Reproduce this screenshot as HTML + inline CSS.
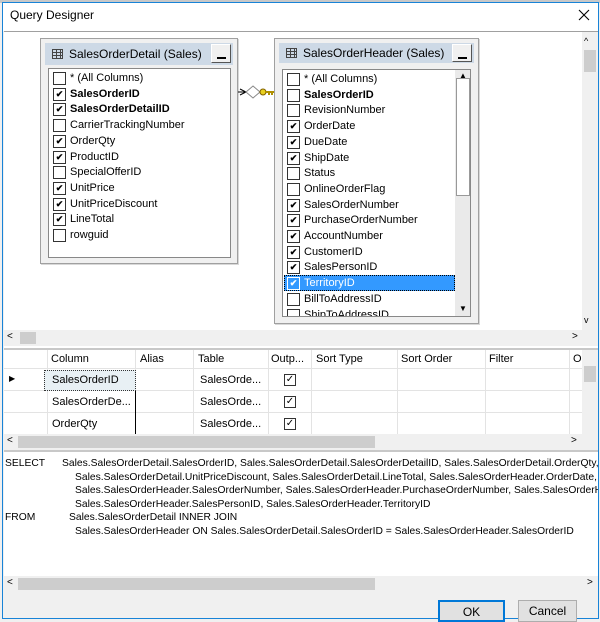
<!DOCTYPE html>
<html><head><meta charset="utf-8"><style>
*{margin:0;padding:0;box-sizing:border-box}
body{width:600px;height:619px;overflow:hidden;background:#f0f0f0;font-family:"Liberation Sans",sans-serif;font-size:11px;color:#000;position:relative}
.a{position:absolute}
.row{position:absolute;left:4px;height:15px;line-height:15px;white-space:nowrap;padding-left:17px}
.cb{position:absolute;left:0;top:1px;width:13px;height:13px;border:1px solid #333;background:#fff;text-align:center;font-size:9px;line-height:11px;font-weight:bold;overflow:hidden}
.b{font-weight:bold}
.tbl{position:absolute;background:#f0f0f0;border:1px solid #a0a0a0;box-shadow:1px 1px 0 #d8d8d8}
.hdr{position:absolute;left:4px;right:4px;top:4px;height:22px;background:#cdd9e6;line-height:22px;padding-left:24px;font-size:12px}
.hdr .ic{position:absolute;left:7px;top:6px;width:11px;height:10px;border:1px solid #444;background:repeating-linear-gradient(90deg,transparent 0 3px,#444 3px 4px),repeating-linear-gradient(0deg,transparent 0 2px,#444 2px 3px)}
.min{position:absolute;right:2px;top:1px;width:20px;height:19px;background:#f0f0f0;border:1px solid #888;border-color:#fff #555 #555 #fff}
.min:after{content:"";position:absolute;left:5px;top:12px;width:9px;height:2px;background:#000}
.list{position:absolute;background:#fff;border:1px solid #888}
.gl{position:absolute;top:0;height:84px;border-left:1px solid #e3e3e3}
.sql{position:absolute;left:6px;white-space:nowrap;font-size:10.3px;line-height:13.5px}
.btn{position:absolute;height:22px;top:600px;background:#e1e1e1;border:1px solid #adadad;text-align:center;line-height:20px;font-size:12px}
</style></head><body>
<div class="a" style="left:0;top:0;width:600px;height:3px;background:#c8c8c8"></div>
<div class="a" style="left:2px;top:2px;width:597px;height:617px;border:1px solid #1883d7;background:#f0f0f0"></div>
<div class="a" style="left:3px;top:3px;width:595px;height:28px;background:#fff"></div>
<div class="a" style="left:10px;top:8px;font-size:12px">Query Designer</div>
<svg class="a" style="left:578px;top:9px" width="12" height="12"><path d="M1 1l10 10M11 1L1 11" stroke="#000" stroke-width="1.1"/></svg>

<!-- diagram pane -->
<div class="a" style="left:4px;top:31px;width:594px;height:317px;background:#fff;border-top:1px solid #a0a0a0"></div>
<div class="a" style="left:582px;top:32px;width:16px;height:298px;background:#f0f0f0"></div>
<div class="a" style="left:584px;top:36px;font-size:9px">^</div>
<div class="a" style="left:584px;top:50px;width:12px;height:22px;background:#cdcdcd"></div>
<div class="a" style="left:584px;top:315px;font-size:9px">v</div>
<div class="a" style="left:4px;top:330px;width:594px;height:16px;background:#f0f0f0"></div>
<div class="a" style="left:7px;top:331px;font-size:10px">&lt;</div>
<div class="a" style="left:20px;top:332px;width:16px;height:12px;background:#cdcdcd"></div>
<div class="a" style="left:572px;top:331px;font-size:10px">&gt;</div>

<!-- left table -->
<div class="tbl" style="left:40px;top:38px;width:198px;height:226px">
<div class="hdr"><div class="ic"></div>SalesOrderDetail (Sales)<div class="min"></div></div>
<div class="list" style="left:7px;top:29px;width:183px;height:190px">
<div class="row" style="top:2px"><span class="cb"></span>* (All Columns)</div>
<div class="row b" style="top:18px"><span class="cb">✔</span>SalesOrderID</div>
<div class="row b" style="top:33px"><span class="cb">✔</span>SalesOrderDetailID</div>
<div class="row" style="top:49px"><span class="cb"></span>CarrierTrackingNumber</div>
<div class="row" style="top:65px"><span class="cb">✔</span>OrderQty</div>
<div class="row" style="top:81px"><span class="cb">✔</span>ProductID</div>
<div class="row" style="top:96px"><span class="cb"></span>SpecialOfferID</div>
<div class="row" style="top:112px"><span class="cb">✔</span>UnitPrice</div>
<div class="row" style="top:128px"><span class="cb">✔</span>UnitPriceDiscount</div>
<div class="row" style="top:143px"><span class="cb">✔</span>LineTotal</div>
<div class="row" style="top:159px"><span class="cb"></span>rowguid</div>
</div></div>

<!-- join connector -->
<svg class="a" style="left:238px;top:82px" width="36" height="20"><path d="M0 10h8M2 7l6 3-6 3" stroke="#000" fill="none"/><path d="M8 10l7-6 7 6-7 6z" fill="#fff" stroke="#888"/><circle cx="25" cy="10" r="3" fill="#e8d020" stroke="#806000"/><path d="M27 10h9M31 10v3M34 10v3" stroke="#b09000" stroke-width="2"/></svg>

<!-- right table -->
<div class="tbl" style="left:274px;top:38px;width:205px;height:286px">
<div class="hdr" style="height:20px;line-height:20px"><div class="ic" style="top:5px"></div>SalesOrderHeader (Sales)<div class="min" style="height:18px"></div></div>
<div class="list" style="left:7px;top:30px;width:189px;height:248px;overflow:hidden">
<div class="row" style="top:2px"><span class="cb"></span>* (All Columns)</div>
<div class="row b" style="top:18px"><span class="cb"></span>SalesOrderID</div>
<div class="row" style="top:33px"><span class="cb"></span>RevisionNumber</div>
<div class="row" style="top:49px"><span class="cb">✔</span>OrderDate</div>
<div class="row" style="top:65px"><span class="cb">✔</span>DueDate</div>
<div class="row" style="top:81px"><span class="cb">✔</span>ShipDate</div>
<div class="row" style="top:96px"><span class="cb"></span>Status</div>
<div class="row" style="top:112px"><span class="cb"></span>OnlineOrderFlag</div>
<div class="row" style="top:128px"><span class="cb">✔</span>SalesOrderNumber</div>
<div class="row" style="top:143px"><span class="cb">✔</span>PurchaseOrderNumber</div>
<div class="row" style="top:159px"><span class="cb">✔</span>AccountNumber</div>
<div class="row" style="top:175px"><span class="cb">✔</span>CustomerID</div>
<div class="row" style="top:190px"><span class="cb">✔</span>SalesPersonID</div>
<div class="a" style="left:1px;top:205px;width:171px;height:16px;background:#3399ff;border:1px dotted #000"></div>
<div class="row" style="top:206px;color:#fff"><span class="cb" style="background:#3399ff;border-color:#fff;color:#fff">✔</span>TerritoryID</div>
<div class="row" style="top:222px"><span class="cb"></span>BillToAddressID</div>
<div class="row" style="top:238px"><span class="cb"></span>ShipToAddressID</div>
<div class="a" style="left:172px;top:0;width:16px;height:248px;background:#eaeaea"></div>
<div class="a" style="left:173px;top:8px;width:14px;height:118px;background:#fff;border:1px solid #999"></div>
<div class="a" style="left:176px;top:1px;font-size:8px">▲</div>
<div class="a" style="left:176px;top:234px;font-size:8px">▼</div>
</div></div>

<!-- grid pane -->
<div class="a" style="left:4px;top:348px;width:594px;height:86px;background:#fff;border-top:2px solid #c8c8c8"></div>
<div class="a" style="left:4px;top:350px;width:578px;height:84px">
<div class="gl" style="left:43px"></div><div class="gl" style="left:131px"></div><div class="gl" style="left:189px"></div><div class="gl" style="left:264px"></div><div class="gl" style="left:307px"></div><div class="gl" style="left:393px"></div><div class="gl" style="left:481px"></div><div class="gl" style="left:565px"></div>
<div class="a" style="left:0;top:18px;width:578px;border-top:1px solid #e3e3e3"></div>
<div class="a" style="left:0;top:40px;width:578px;border-top:1px solid #e3e3e3"></div>
<div class="a" style="left:0;top:62px;width:578px;border-top:1px solid #e3e3e3"></div>
<div class="a" style="top:3px;left:47px">Column</div><div class="a" style="top:3px;left:136px">Alias</div><div class="a" style="top:3px;left:194px">Table</div><div class="a" style="top:3px;left:267px">Outp...</div><div class="a" style="top:3px;left:312px">Sort Type</div><div class="a" style="top:3px;left:397px">Sort Order</div><div class="a" style="top:3px;left:485px">Filter</div><div class="a" style="top:3px;left:569px">O</div>
<div class="a" style="left:5px;top:24px;font-size:8px">▶</div>
<div class="a" style="left:40px;top:20px;width:92px;height:21px;background:#e8f0f4;border:1px dotted #333"></div>
<div class="a" style="left:48px;top:24px">SalesOrderID</div>
<div class="a" style="left:48px;top:46px">SalesOrderDe...</div>
<div class="a" style="left:48px;top:68px">OrderQty</div>
<div class="a" style="left:131px;top:41px;height:43px;border-left:1px solid #000"></div>
<div class="a" style="left:196px;top:24px">SalesOrde...</div>
<div class="a" style="left:196px;top:46px">SalesOrde...</div>
<div class="a" style="left:196px;top:68px">SalesOrde...</div>
<div class="a" style="left:280px;top:24px;width:12px;height:12px;border:1px solid #333;font-size:10px;line-height:10px;text-align:center">✓</div>
<div class="a" style="left:280px;top:46px;width:12px;height:12px;border:1px solid #333;font-size:10px;line-height:10px;text-align:center">✓</div>
<div class="a" style="left:280px;top:68px;width:12px;height:12px;border:1px solid #333;font-size:10px;line-height:10px;text-align:center">✓</div>
</div>
<div class="a" style="left:582px;top:350px;width:16px;height:84px;background:#f0f0f0"></div>
<div class="a" style="left:584px;top:366px;width:12px;height:16px;background:#cdcdcd"></div>
<div class="a" style="left:4px;top:434px;width:594px;height:16px;background:#f0f0f0"></div>
<div class="a" style="left:7px;top:435px;font-size:10px">&lt;</div>
<div class="a" style="left:18px;top:436px;width:357px;height:12px;background:#cdcdcd"></div>
<div class="a" style="left:571px;top:435px;font-size:10px">&gt;</div>

<!-- SQL pane -->
<div class="a" style="left:4px;top:450px;width:594px;height:126px;background:#fff;border-top:2px solid #c8c8c8;overflow:hidden">
<div class="sql" style="left:1px;top:5px">SELECT</div>
<div class="sql" style="left:58px;top:5px">Sales.SalesOrderDetail.SalesOrderID, Sales.SalesOrderDetail.SalesOrderDetailID, Sales.SalesOrderDetail.OrderQty,</div>
<div class="sql" style="left:71px;top:19px">Sales.SalesOrderDetail.UnitPriceDiscount, Sales.SalesOrderDetail.LineTotal, Sales.SalesOrderHeader.OrderDate,</div>
<div class="sql" style="left:71px;top:32px">Sales.SalesOrderHeader.SalesOrderNumber, Sales.SalesOrderHeader.PurchaseOrderNumber, Sales.SalesOrderHeader</div>
<div class="sql" style="left:71px;top:46px">Sales.SalesOrderHeader.SalesPersonID, Sales.SalesOrderHeader.TerritoryID</div>
<div class="sql" style="left:1px;top:59px">FROM</div>
<div class="sql" style="left:65px;top:59px">Sales.SalesOrderDetail INNER JOIN</div>
<div class="sql" style="left:71px;top:73px">Sales.SalesOrderHeader ON Sales.SalesOrderDetail.SalesOrderID = Sales.SalesOrderHeader.SalesOrderID</div>
</div>
<div class="a" style="left:4px;top:576px;width:594px;height:16px;background:#f0f0f0"></div>
<div class="a" style="left:7px;top:577px;font-size:10px">&lt;</div>
<div class="a" style="left:18px;top:578px;width:357px;height:12px;background:#cdcdcd"></div>
<div class="a" style="left:587px;top:577px;font-size:10px">&gt;</div>

<div class="btn" style="left:438px;width:67px;border:2px solid #0078d7">OK</div>
<div class="btn" style="left:518px;width:59px">Cancel</div>
</body></html>
